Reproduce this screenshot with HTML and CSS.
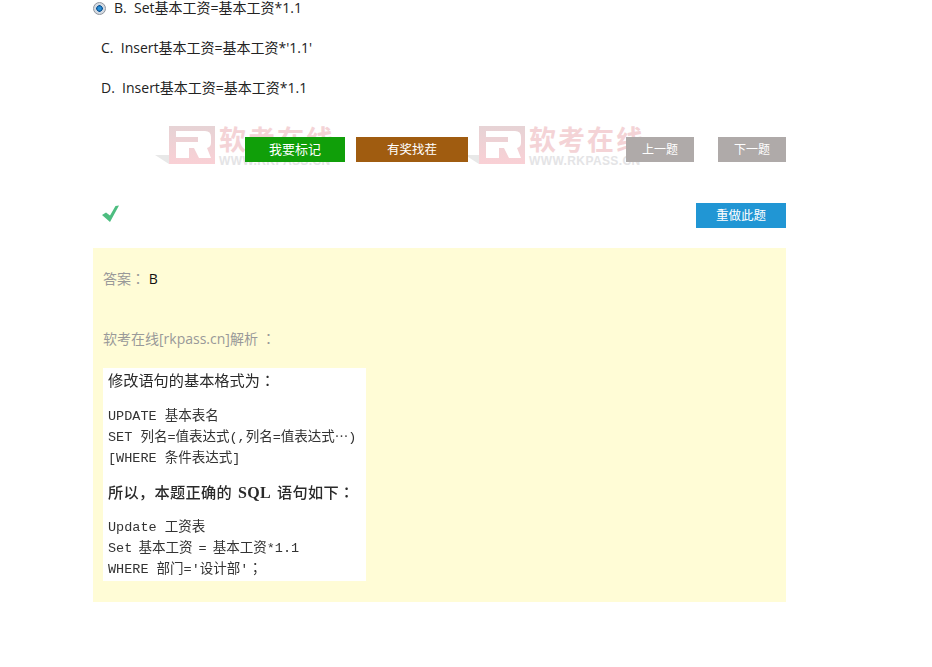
FILE: index.html
```html
<!DOCTYPE html>
<html lang="zh-CN">
<head>
<meta charset="utf-8">
<title>软考在线</title>
<link rel="stylesheet" href="styles.css">
</head>
<body>
<main class="main">
  <div class="option option-selected"><span class="radio"></span><span>B.&nbsp; Set基本工资=基本工资*1.1</span></div>
  <div class="option option-plain">C.&nbsp; Insert基本工资=基本工资*'1.1'</div>
  <div class="option option-plain">D.&nbsp; Insert基本工资=基本工资*1.1</div>

  <div class="actions">
    <div class="watermark wm-one">
      <svg class="wm-logo" viewBox="0 0 61 38" width="61" height="38"><defs><linearGradient id="wmg" x1="0" y1="0" x2="0" y2="1"><stop offset="0" stop-color="#e6d3d5"/><stop offset="1" stop-color="#f9d0d5"/></linearGradient></defs><path d="M0 29 L14 29 L14 38 Z" fill="#e8e8e8"/><path fill="url(#wmg)" d="M14 0h46v38H14z"/><path fill="#fff" d="M21 5H50Q56 5 56 11V17Q56 21 52 22L56 32H44L39 22H34V32H21V16H43V11H21Z"/></svg>
      <div class="wm-text"><span class="wm-cn">软考在线</span><span class="wm-url">WWW.RKPASS.CN</span></div>
    </div>
    <div class="watermark wm-two">
      <svg class="wm-logo" viewBox="0 0 61 38" width="61" height="38"><path d="M0 29 L14 29 L14 38 Z" fill="#e8e8e8"/><path fill="url(#wmg)" d="M14 0h46v38H14z"/><path fill="#fff" d="M21 5H50Q56 5 56 11V17Q56 21 52 22L56 32H44L39 22H34V32H21V16H43V11H21Z"/></svg>
      <div class="wm-text"><span class="wm-cn">软考在线</span><span class="wm-url">WWW.RKPASS.CN</span></div>
    </div>
    <a class="btn btn-mark">我要标记</a>
    <a class="btn btn-prize">有奖找茬</a>
    <a class="btn btn-prev">上一题</a>
    <a class="btn btn-next">下一题</a>
  </div>

  <div class="result">
    <svg class="check" viewBox="0 0 18 18" width="18" height="18"><path fill="#4dbd80" d="M0 10 L4 7.500 L8 10.500 L13.500 1 L17 0.500 L8 17 Z"/></svg>
    <a class="btn btn-redo">重做此题</a>
  </div>

  <section class="panel">
    <p class="answer"><span class="label">答案<span class="punct" lang="zh-TW">：</span> </span><span class="value">B</span></p>
    <p class="analysis">软考在线[rkpass.cn]解析 <span class="punct" lang="zh-TW">：</span></p>
    <div class="scan">
      <p class="scan-title">修改语句的基本格式为<span class="punct" lang="zh-TW">：</span></p>
      <p class="code code-first">UPDATE 基本表名</p>
      <p class="code code-tight">SET 列名=值表达式(,列名=值表达式⋯)</p>
      <p class="code code-tight">[WHERE 条件表达式]</p>
      <p class="scan-title scan-second">所以，本题正确的 <span class="sql">SQL</span> 语句如下<span class="punct" lang="zh-TW">：</span></p>
      <p class="code code-first code-second">Update 工资表</p>
      <p class="code code-tight code-narrow">Set 基本工资 = 基本工资*1.1</p>
      <p class="code code-tight">WHERE 部门='设计部'<span class="punct" lang="zh-TW">；</span></p>
    </div>
  </section>
</main>
</body>
</html>
```
FILE: styles.css
```css
* { box-sizing: border-box; }
html, body { margin: 0; padding: 0; background: #fff; }
body {
  font-family: "Open Sans", "Noto Sans CJK SC", sans-serif;
  font-size: 14px;
  color: #222;
  height: 667px;
  overflow: hidden;
}
.main { width: 693px; margin-left: 93px; padding-top: 1px; }

.option { height: 14px; line-height: 14px; margin-bottom: 26px; white-space: nowrap; }
.option-selected { display: flex; align-items: center; gap: 8px; }
.option-plain { padding-left: 8px; }
.radio {
  width: 13px; height: 13px; border-radius: 50%;
  border: 1px solid #8f949c;
  background: radial-gradient(circle, #2a8fd6 0 1.500px, #0a4f90 3px, #d3dae2 3.500px);
}
.punct { font-family: "Noto Sans CJK TC", sans-serif; line-height: 0; }

.actions { position: relative; height: 25px; margin-top: 42px; }
.watermark { position: absolute; top: -11px; display: flex; }
.wm-one { left: 62px; }
.wm-two { left: 372px; }
.wm-logo { display: block; flex: none; }
.wm-text { display: flex; flex-direction: column; margin-left: 3px; }
.wm-cn { color: #f4d3d6; font-size: 27px; line-height: 28px; font-weight: 700; letter-spacing: 2px; white-space: nowrap; }
.wm-url { color: #e4e4e6; font-size: 12px; line-height: 14px; font-weight: 700; font-family: "Liberation Sans", sans-serif; letter-spacing: .400px; white-space: nowrap; }

.btn {
  position: absolute; top: 0; height: 25px; line-height: 25px;
  color: #fff; font-size: 12.500px; text-align: center;
}
.btn-mark { left: 152px; width: 100px; background: #109f09; font-size: 13px; }
.btn-prize { left: 263px; width: 112px; background: #a05c10; }
.btn-prev { left: 533px; width: 68px; background: #afaaa9; font-size: 12px; }
.btn-next { left: 625px; width: 68px; background: #afaaa9; font-size: 12px; }

.result { display: flex; justify-content: space-between; height: 25px; margin-top: 41px; }
.check { margin: 2px 0 0 9px; }
.btn-redo { position: static; width: 90px; background: #2196d4; }

.panel { height: 354px; margin-top: 20px; padding: 22px 10px 0; background: #fffcd6; }
.answer, .analysis { margin: 0; line-height: 18px; color: #999; font-size: 14px; }
.answer .value { color: #111; }
.analysis { margin-top: 42px; }

.scan {
  width: 263px; height: 213px; margin-top: 20px; padding: 4px 5px 0;
  background: #fff; color: #333; overflow: hidden; white-space: nowrap;
  filter: blur(.35px);
}
.scan p { margin: 0; }
.scan-title { font-family: "Liberation Serif", "Noto Sans CJK SC", serif; font-size: 15.200px; line-height: 18px; color: #2a2a2a; }
.scan .scan-second { margin-top: 15px; font-weight: 500; letter-spacing: .3px; word-spacing: 2px; }
.sql { font-weight: 700; font-size: 16px; line-height: 0; }
.code { font-family: "Liberation Mono", "Noto Sans CJK SC", monospace; font-size: 13.500px; line-height: 20px; }
.scan .code-first { margin-top: 17px; }
.scan .code-second { margin-top: 16px; }
.scan .code-tight { margin-top: 1px; }
.code-narrow { word-spacing: -2px; }
```
